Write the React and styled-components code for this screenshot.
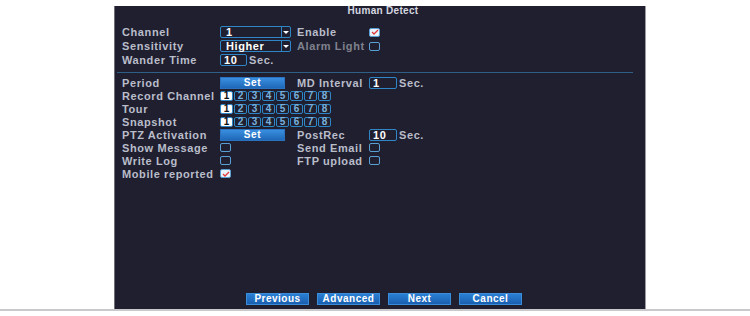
import styled, { createGlobalStyle } from "styled-components";

const GlobalStyle = createGlobalStyle`
  html, body {
    margin: 0;
    padding: 0;
    background: #ffffff;
  }
  body {
    font-family: "Liberation Sans", Arial, sans-serif;
  }
`;

const Page = styled.div`
  width: 750px;
  height: 316px;
  display: flex;
  flex-direction: column;
  align-items: flex-start;
  padding: 6px 0 0 114px;
  box-sizing: border-box;
  overflow: hidden;
`;

const BottomRule = styled.div`
  width: 750px;
  margin-left: -114px;
  height: 2px;
  background: #c9c9cc;
`;

const Panel = styled.div`
  width: 532px;
  height: 303px;
  box-sizing: border-box;
  background: #201f2f;
  border-left: 1px solid #6f6f78;
  border-right: 1px solid #9a9aa0;
  display: flex;
  flex-direction: column;
  color: #b9bdca;
  font-size: 11px;
  font-weight: bold;
  letter-spacing: 0.6px;
`;

const Title = styled.div`
  height: 10px;
  line-height: 10px;
  text-align: center;
  font-size: 10px;
  color: #d6d8e0;
  letter-spacing: 0.3px;
  padding-left: 6px;
`;

const Section = styled.div`
  display: grid;
  grid-template-columns: 98px 77px 72px 1fr;
  grid-auto-rows: ${(p) => p.$row}px;
  align-items: center;
  padding-left: 7px;
  margin-top: ${(p) => p.$top || 0}px;
`;

const Label = styled.div`
  color: ${(p) => (p.$dim ? "#7f828e" : "#b9bdca")};
  white-space: nowrap;
`;

const Cell = styled.div`
  display: flex;
  align-items: center;
  gap: 2px;
  grid-column: ${(p) => p.$span || "auto"};
`;

const Select = styled.div`
  width: 71px;
  height: 12px;
  box-sizing: border-box;
  border: 1px solid #2f86c6;
  border-radius: 2px;
  display: flex;
  align-items: stretch;
  color: #ffffff;
`;

const SelectValue = styled.span`
  flex: 1;
  line-height: 10px;
  padding-left: 5px;
`;

const SelectArrow = styled.span`
  width: 8px;
  border-left: 1px solid #2f86c6;
  display: flex;
  align-items: center;
  justify-content: center;
  &::after {
    content: "";
    border-left: 3px solid transparent;
    border-right: 3px solid transparent;
    border-top: 3px solid #ffffff;
  }
`;

const Input = styled.div`
  width: ${(p) => p.$w || 28}px;
  height: 12px;
  box-sizing: border-box;
  border: 1px solid #2f86c6;
  border-radius: 2px;
  color: #ffffff;
  line-height: 10px;
  padding-left: 3px;
`;

const Unit = styled.span`
  color: #b9bdca;
`;

const Check = styled.div`
  width: 11px;
  height: 9px;
  box-sizing: border-box;
  border: 1px solid #5a9fd4;
  border-radius: 2px;
  background: ${(p) => (p.$on ? "#e8f2fb" : "transparent")};
  display: flex;
  align-items: center;
  justify-content: center;
`;

const Rule = styled.div`
  height: 1px;
  background: #2e5f86;
  margin: 5px 12px 4px 2px;
`;

const SetButton = styled.div`
  width: 65px;
  height: 12px;
  box-sizing: border-box;
  background: linear-gradient(#3a8fe0, #1f68b8);
  border: 1px solid #2a72c0;
  color: #ffffff;
  font-size: 10px;
  line-height: 10px;
  text-align: center;
`;

const ChanBox = styled.div`
  width: 13px;
  height: 10px;
  box-sizing: border-box;
  border: 1px solid #2f86c6;
  border-radius: 2px;
  background: ${(p) => (p.$on ? "#ffffff" : "transparent")};
  color: ${(p) => (p.$on ? "#111" : "#78b0dc")};
  font-size: 10px;
  line-height: 8px;
  text-align: center;
  letter-spacing: 0;
`;

const Chans = styled.div`
  display: flex;
  gap: 1px;
`;

const Spacer = styled.div`
  flex: 1;
`;

const Footer = styled.div`
  display: flex;
  justify-content: center;
  gap: 8px;
  padding: 0 0 4px 8px;
`;

const FootButton = styled.div`
  width: 63px;
  height: 12px;
  box-sizing: border-box;
  background: linear-gradient(#2a7fd4, #1a5faf);
  border: 1px solid #3b8cd8;
  color: #ffffff;
  font-size: 10px;
  line-height: 10px;
  text-align: center;
  letter-spacing: 0.5px;
`;

const Tick = () => (
  <svg width="8" height="6" viewBox="0 0 8 6">
    <path d="M1 3 L3 5 L7 1" stroke="#e23a3a" strokeWidth="1.3" fill="none" />
  </svg>
);

const ChannelPicker = () => (
  <Chans>
    {[1, 2, 3, 4, 5, 6, 7, 8].map((n) => (
      <ChanBox key={n} $on={n === 1}>{n}</ChanBox>
    ))}
  </Chans>
);

export default function App() {
  return (
    <>
      <GlobalStyle />
      <Page>
        <Panel>
          <Title>Human Detect</Title>
          <Section $row={14} $top={9}>
            <Label>Channel</Label>
            <Cell>
              <Select>
                <SelectValue>1</SelectValue>
                <SelectArrow />
              </Select>
            </Cell>
            <Label>Enable</Label>
            <Cell>
              <Check $on>
                <Tick />
              </Check>
            </Cell>

            <Label>Sensitivity</Label>
            <Cell>
              <Select>
                <SelectValue>Higher</SelectValue>
                <SelectArrow />
              </Select>
            </Cell>
            <Label $dim>Alarm Light</Label>
            <Cell>
              <Check />
            </Cell>

            <Label>Wander Time</Label>
            <Cell $span="span 3">
              <Input $w={27}>10</Input>
              <Unit>Sec.</Unit>
            </Cell>
          </Section>

          <Rule />

          <Section $row={12.9}>
            <Label>Period</Label>
            <Cell>
              <SetButton>Set</SetButton>
            </Cell>
            <Label>MD Interval</Label>
            <Cell>
              <Input>1</Input>
              <Unit>Sec.</Unit>
            </Cell>

            <Label>Record Channel</Label>
            <Cell $span="span 3">
              <ChannelPicker />
            </Cell>

            <Label>Tour</Label>
            <Cell $span="span 3">
              <ChannelPicker />
            </Cell>

            <Label>Snapshot</Label>
            <Cell $span="span 3">
              <ChannelPicker />
            </Cell>

            <Label>PTZ Activation</Label>
            <Cell>
              <SetButton>Set</SetButton>
            </Cell>
            <Label>PostRec</Label>
            <Cell>
              <Input>10</Input>
              <Unit>Sec.</Unit>
            </Cell>

            <Label>Show Message</Label>
            <Cell>
              <Check />
            </Cell>
            <Label>Send Email</Label>
            <Cell>
              <Check />
            </Cell>

            <Label>Write Log</Label>
            <Cell>
              <Check />
            </Cell>
            <Label>FTP upload</Label>
            <Cell>
              <Check />
            </Cell>

            <Label>Mobile reported</Label>
            <Cell>
              <Check $on>
                <Tick />
              </Check>
            </Cell>
          </Section>

          <Spacer />

          <Footer>
            <FootButton>Previous</FootButton>
            <FootButton>Advanced</FootButton>
            <FootButton>Next</FootButton>
            <FootButton>Cancel</FootButton>
          </Footer>
        </Panel>
        <BottomRule />
      </Page>
    </>
  );
}
